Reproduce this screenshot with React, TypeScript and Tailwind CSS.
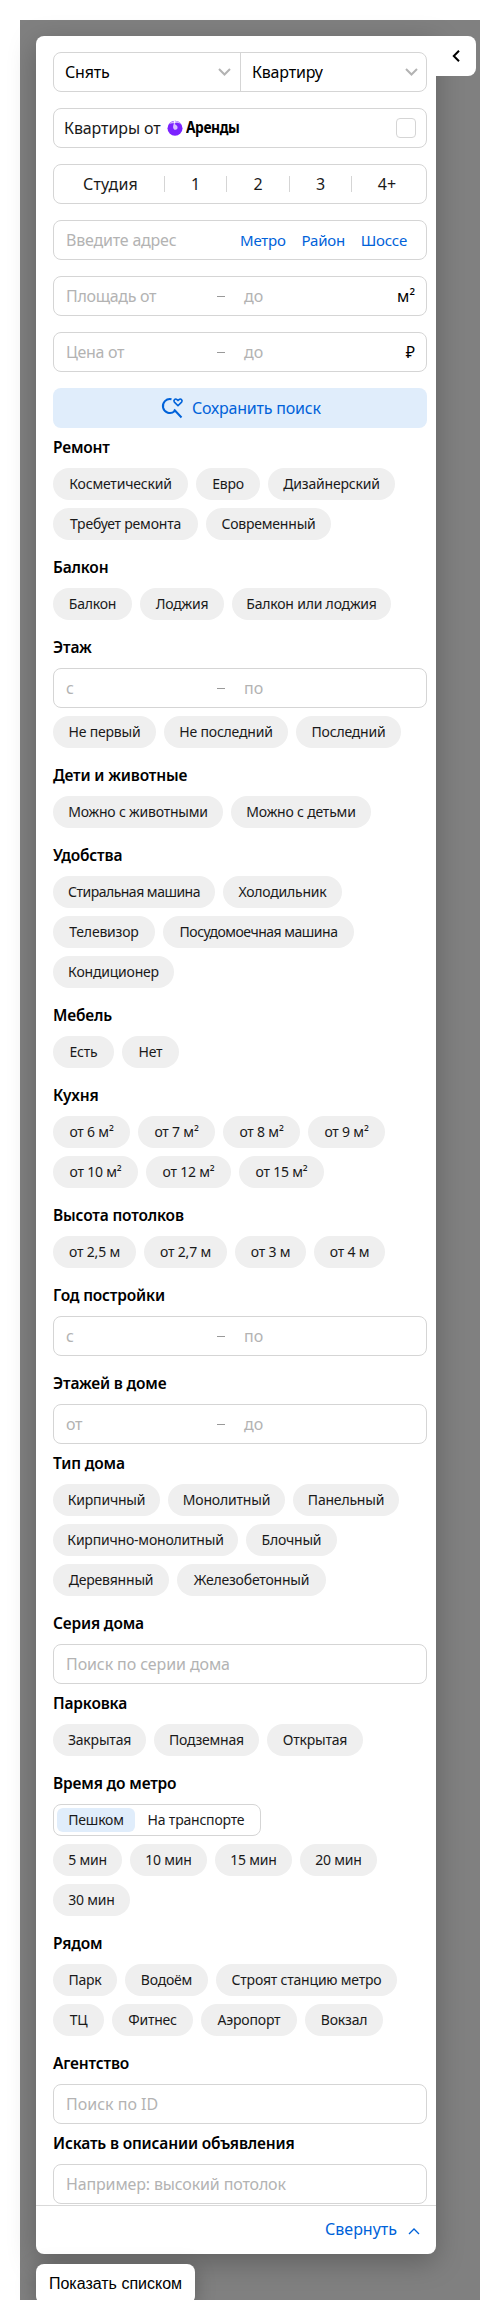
import type { ReactNode } from 'react';

type ChipData = [label: string, width: string];

function Chips({ items }: { items: ChipData[] }) {
  return (
    <div className="flex flex-wrap gap-2 pb-2">
      {items.map(([label, width]) => (
        <button
          key={label}
          className={`flex h-8 shrink-0 items-center justify-center whitespace-nowrap rounded-full bg-[#efefef] pb-px text-[14px] text-[#1a1a1a] ${label.endsWith('машина') ? 'tracking-[-0.5px]' : 'tracking-[-0.2px]'} ${width}`}
        >
          {label}
        </button>
      ))}
    </div>
  );
}

function Section({ title, children }: { title: string; children: ReactNode }) {
  return (
    <section>
      <h3 className="flex h-10 items-center text-[15.5px] font-semibold tracking-[-0.17px] text-black">{title}</h3>
      {children}
    </section>
  );
}

function Field({ children, className = '' }: { children: ReactNode; className?: string }) {
  return (
    <div className={`flex h-10 w-[374px] items-center rounded-lg border border-[#d5d5d5] text-[16px] ${className}`}>
      {children}
    </div>
  );
}

function Range({ from, to, unit }: { from: string; to: string; unit?: string }) {
  return (
    <Field className="pl-3 pr-[11px] text-[#b3b3b3]">
      <span className="w-[151px] tracking-[-0.3px]">{from}</span>
      <span className="mr-[19px] h-px w-[8px] bg-[#999]" />
      <span className="flex-1">{to}</span>
      <span className="text-black">{unit}</span>
    </Field>
  );
}

function Down() {
  return (
    <svg className="h-[8px] w-[13px]" viewBox="0 0 13 8" fill="none" stroke="#b3b3b3" strokeWidth="2">
      <path d="M1 1l5.5 5.5L12 1" />
    </svg>
  );
}

function Divider() {
  return <span className="h-4 w-px bg-[#d5d5d5]" />;
}

export default function App() {
  return (
    <div className="h-[2300px] w-[500px] overflow-hidden bg-white px-5 pt-5 font-['Noto_Sans','Open_Sans',sans-serif]">
      <div className="h-[2280px] w-[460px] bg-[#808080] pl-4 pt-4">
        <div className="flex items-start">
          <main className="h-[2218px] w-[400px] shrink-0 rounded-b-lg rounded-tl-lg bg-white shadow-[0_8px_28px_rgba(0,0,0,0.25)]">
            <div className="h-[2170px] border-b border-[#d9d9d9] pl-[17px] pt-4">
              <div className="flex flex-col gap-4">
                <Field className="text-black">
                  <div className="flex h-full w-[187px] items-center justify-between border-r border-[#d5d5d5] pl-[11px] pr-[9px]">
                    <span className="tracking-[-0.2px]">Снять</span>
                    <Down />
                  </div>
                  <div className="flex flex-1 items-center justify-between pl-[11px] pr-[8px]">
                    <span className="tracking-[-0.2px]">Квартиру</span>
                    <Down />
                  </div>
                </Field>
                <Field className="pl-[10px] pr-[10px] text-[#1a1a1a]">
                  <span className="w-[103px] whitespace-nowrap tracking-[-0.1px]">Квартиры от</span>
                  <svg className="h-4 w-4" viewBox="0 0 16 16">
                    <circle cx="8" cy="8.200" r="7.500" fill="#7b22ff" />
                    <path d="M2 4.300A7.500 7.500 0 0 1 14.800 5C12.500 2.700 9.500 2.400 7.500 3.400 5.500 2.900 3.500 3.300 2 4.300z" fill="#d4b8ff" />
                    <path d="M7 3.300c-1 2.300-1.300 4.200-.3 5.600.8 1.100 2.500 1.200 3.400.1 1-1.400.4-3-1.100-4z" fill="#d9c2ff" />
                    <path d="M7.600.300v3.200" stroke="#fff" strokeWidth="1" />
                  </svg>
                  <span className="ml-[3px] w-[54px] origin-left scale-x-[0.89] text-[15.5px] font-bold tracking-[-0.5px] text-black">Аренды</span>
                  <span className="ml-auto h-5 w-5 rounded-[4px] border border-[#d5d5d5]" />
                </Field>
                <Field className="text-[#1a1a1a]">
                  <span className="w-[110px] pl-[3px] text-center tracking-[0.2px]">Студия</span>
                  <Divider />
                  <span className="w-[61px] text-center">1</span>
                  <Divider />
                  <span className="w-[62px] text-center">2</span>
                  <Divider />
                  <span className="w-[61px] text-center">3</span>
                  <Divider />
                  <span className="w-[70px] text-center">4+</span>
                </Field>
                <Field className="pl-3 pr-[19px]">
                  <span className="w-[174px] tracking-[-0.2px] text-[#b3b3b3]">Введите адрес</span>
                  <div className="flex flex-1 justify-between pt-px text-[15px] tracking-[-0.2px] text-[#0062d9]">
                    <span>Метро</span>
                    <span>Район</span>
                    <span>Шоссе</span>
                  </div>
                </Field>
                <Range from="Площадь от" to="до" unit="м²" />
                <Range from="Цена от" to="до" unit="₽" />
                <button className="flex h-10 w-[374px] items-center rounded-lg bg-[#e0edfb] pl-[108px] text-[16px] text-[#0062d9]">
                  <svg className="mr-[8px] h-[22px] w-[23px]" viewBox="0 0 23 22" fill="none" stroke="#0062d9" strokeWidth="2">
                    <path d="M10.500 2.200A7 7 0 1 0 13.500 14.300M13 12.500l7.500 8" />
                    <path d="M17 8.700l-3.600-3.600c-1.400-1.600.8-4.100 2.600-2.500l1 .9 1-.9c1.800-1.600 4 .9 2.600 2.500z" strokeWidth="1.600" />
                  </svg>
                  <span className="tracking-[-0.2px]">Сохранить поиск</span>
                </button>
              </div>

              <Section title="Ремонт">
                <Chips items={[['Косметический', 'w-[135px]'], ['Евро', 'w-[64px]'], ['Дизайнерский', 'w-[127px]'], ['Требует ремонта', 'w-[145px]'], ['Современный', 'w-[125px]']]} />
              </Section>
              <Section title="Балкон">
                <Chips items={[['Балкон', 'w-[79px]'], ['Лоджия', 'w-[84px]'], ['Балкон или лоджия', 'w-[159px]']]} />
              </Section>
              <Section title="Этаж">
                <div className="mb-2"><Range from="с" to="по" /></div>
                <Chips items={[['Не первый', 'w-[103px]'], ['Не последний', 'w-[124px]'], ['Последний', 'w-[105px]']]} />
              </Section>
              <Section title="Дети и животные">
                <Chips items={[['Можно с животными', 'w-[170px]'], ['Можно с детьми', 'w-[140px]']]} />
              </Section>
              <Section title="Удобства">
                <Chips items={[['Стиральная машина', 'w-[162px]'], ['Холодильник', 'w-[119px]'], ['Телевизор', 'w-[102px]'], ['Посудомоечная машина', 'w-[191px]'], ['Кондиционер', 'w-[121px]']]} />
              </Section>
              <Section title="Мебель">
                <Chips items={[['Есть', 'w-[61px]'], ['Нет', 'w-[57px]']]} />
              </Section>
              <Section title="Кухня">
                <Chips items={[['от 6 м²', 'w-[77px]'], ['от 7 м²', 'w-[77px]'], ['от 8 м²', 'w-[77px]'], ['от 9 м²', 'w-[77px]'], ['от 10 м²', 'w-[85px]'], ['от 12 м²', 'w-[85px]'], ['от 15 м²', 'w-[85px]']]} />
              </Section>
              <Section title="Высота потолков">
                <Chips items={[['от 2,5 м', 'w-[83px]'], ['от 2,7 м', 'w-[83px]'], ['от 3 м', 'w-[71px]'], ['от 4 м', 'w-[71px]']]} />
              </Section>
              <Section title="Год постройки">
                <div className="mb-2"><Range from="с" to="по" /></div>
              </Section>
              <Section title="Этажей в доме">
                <Range from="от" to="до" />
              </Section>
              <Section title="Тип дома">
                <Chips items={[['Кирпичный', 'w-[107px]'], ['Монолитный', 'w-[117px]'], ['Панельный', 'w-[106px]'], ['Кирпично-монолитный', 'w-[185px]'], ['Блочный', 'w-[91px]'], ['Деревянный', 'w-[116px]'], ['Железобетонный', 'w-[149px]']]} />
              </Section>
              <Section title="Серия дома">
                <Field className="pl-3 tracking-[-0.1px] text-[#b3b3b3]">Поиск по серии дома</Field>
              </Section>
              <Section title="Парковка">
                <Chips items={[['Закрытая', 'w-[93px]'], ['Подземная', 'w-[105px]'], ['Открытая', 'w-[96px]']]} />
              </Section>
              <Section title="Время до метро">
                <div className="mb-2 flex h-8 w-[208px] items-center rounded-lg border border-[#d5d5d5] pl-[3px] text-[14px] tracking-[-0.2px] text-[#1a1a1a]">
                  <span className="flex h-6 w-[78px] items-center justify-center rounded-md bg-[#e0edfb] pb-px">Пешком</span>
                  <span className="flex-1 pb-px pr-[3px] text-center">На транспорте</span>
                </div>
                <Chips items={[['5 мин', 'w-[69px]'], ['10 мин', 'w-[77px]'], ['15 мин', 'w-[77px]'], ['20 мин', 'w-[77px]'], ['30 мин', 'w-[77px]']]} />
              </Section>
              <Section title="Рядом">
                <Chips items={[['Парк', 'w-[64px]'], ['Водоём', 'w-[83px]'], ['Строят станцию метро', 'w-[181px]'], ['ТЦ', 'w-[51px]'], ['Фитнес', 'w-[81px]'], ['Аэропорт', 'w-[96px]'], ['Вокзал', 'w-[78px]']]} />
              </Section>
              <Section title="Агентство">
                <Field className="pl-3 text-[#b3b3b3]">Поиск по ID</Field>
              </Section>
              <Section title="Искать в описании объявления">
                <Field className="pl-3 tracking-[-0.15px] text-[#b3b3b3]">Например: высокий потолок</Field>
              </Section>
            </div>
            <div className="flex h-12 items-center justify-end gap-[11px] pb-[2px] pr-4 text-[16px] text-[#0062d9]">
              <span>Свернуть</span>
              <svg className="mt-1 h-[7px] w-[12px]" viewBox="0 0 12 7" fill="none" stroke="#0062d9" strokeWidth="1.3">
                <path d="M1 6l5-5 5 5" />
              </svg>
            </div>
          </main>
          <button className="flex h-10 w-10 items-center justify-center rounded-r-lg bg-white pr-px">
            <svg className="h-3 w-2" viewBox="0 0 8 12" fill="none" stroke="#000" strokeWidth="2">
              <path d="M7 .8L1.800 6 7 11.200" />
            </svg>
          </button>
        </div>
        <button className="relative mt-[10px] flex h-10 w-[159px] items-center justify-center rounded-lg bg-white text-[16px] text-black shadow-[0_4px_20px_rgba(0,0,0,0.25)] font-['Liberation_Sans',sans-serif]">
          Показать списком
        </button>
      </div>
    </div>
  );
}
